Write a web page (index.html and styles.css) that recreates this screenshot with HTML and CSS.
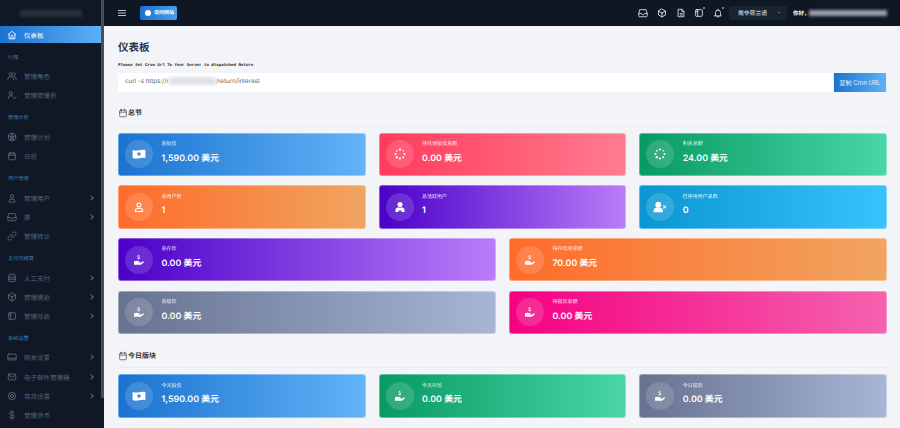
FILE: index.html
```html
<!DOCTYPE html>
<html lang="zh-CN">
<head>
    <meta charset="UTF-8">
    <title>仪表板</title>
    <link rel="stylesheet" href="styles.css">
</head>
<body>
    <svg class="sprite" width="0" height="0">
        <symbol id="i-home" viewBox="0 0 24 24"><path d="M3 11l9-8 9 8M5 9.500V21h14V9.500M9.500 21v-6a2.500 2.500 0 0 1 5 0v6"/></symbol>
        <symbol id="i-users" viewBox="0 0 24 24"><circle cx="9" cy="8" r="4"/><path d="M2 21v-2a5 5 0 0 1 5-5h4a5 5 0 0 1 5 5v2M16 4a4 4 0 0 1 0 8M18 14a5 5 0 0 1 4 5v2"/></symbol>
        <symbol id="i-user-check" viewBox="0 0 24 24"><circle cx="9" cy="8" r="4"/><path d="M3 21v-2a5 5 0 0 1 5-5h3a5 5 0 0 1 4 2M15 19l2.500 2.500L22 16"/></symbol>
        <symbol id="i-globe" viewBox="0 0 24 24"><circle cx="12" cy="12" r="9"/><circle cx="12" cy="12" r="3"/><path d="M12 3v6M12 15v6M3.500 9l6 2M14.500 11l6-2M7 19.500l3-5.500M17 19.500L14 14"/></symbol>
        <symbol id="i-calendar" viewBox="0 0 24 24"><rect x="4" y="5" width="16" height="16" rx="2"/><path d="M4 10h16M8 3v4M16 3v4"/></symbol>
        <symbol id="i-user" viewBox="0 0 24 24"><circle cx="12" cy="8" r="4"/><path d="M5 21v-2a4 4 0 0 1 4-4h6a4 4 0 0 1 4 4v2z"/></symbol>
        <symbol id="i-inbox" viewBox="0 0 24 24"><path d="M5 4h14l3 9v6a2 2 0 0 1-2 2H4a2 2 0 0 1-2-2v-6zM2 13h6l2 3h4l2-3h6"/></symbol>
        <symbol id="i-link" viewBox="0 0 24 24"><path d="M10 14a4.500 4.500 0 0 0 6.500 0l4-4a4.500 4.500 0 0 0-6.500-6.500l-1 1M14 10a4.500 4.500 0 0 0-6.500 0l-4 4a4.500 4.500 0 0 0 6.500 6.500l1-1"/></symbol>
        <symbol id="i-database" viewBox="0 0 24 24"><rect x="4" y="3" width="16" height="18" rx="4"/><path d="M4 10h16M4 15h16"/></symbol>
        <symbol id="i-box" viewBox="0 0 24 24"><path d="M12 2.500l8.500 5v9l-8.500 5-8.500-5v-9zM12 12l8.500-4.500M12 12L3.500 7.500M12 12v9.500"/></symbol>
        <symbol id="i-layout" viewBox="0 0 24 24"><rect x="4" y="4" width="16" height="16" rx="1.500"/><path d="M9 4v16M4 9h5"/></symbol>
        <symbol id="i-card" viewBox="0 0 24 24"><rect x="2" y="5" width="20" height="14" rx="2"/><path d="M2 15h20"/></symbol>
        <symbol id="i-mail" viewBox="0 0 24 24"><rect x="3" y="5" width="18" height="14" rx="2"/><path d="M3 7l9 6 9-6"/></symbol>
        <symbol id="i-gear" viewBox="0 0 24 24"><circle cx="12" cy="12" r="3.500"/><path d="M12 2.500l2.500 2.500h4.500v4.500l2.500 2.500-2.500 2.500v4.500h-4.500L12 21.500 9.500 19H5v-4.500L2.500 12 5 9.500V5h4.500z"/></symbol>
        <symbol id="i-dollar" viewBox="0 0 24 24"><path d="M17 7a4 4 0 0 0-4-2.500h-2.500a3.500 3.500 0 0 0 0 7.500h3a3.500 3.500 0 0 1 0 7.500H10a4 4 0 0 1-4-2.500M12 2v20"/></symbol>
        <symbol id="i-file" viewBox="0 0 24 24"><path d="M6 3h8l5 5v13H6zM14 3v5h5M10 13h5M10 17h5"/></symbol>
        <symbol id="i-bell" viewBox="0 0 24 24"><path d="M6 17V11a6 6 0 0 1 12 0v6l2 2H4zM10 21h4M12 3v2"/></symbol>
        <symbol id="i-cash" viewBox="0 0 24 24"><path class="solid" fill-rule="evenodd" d="M1 5c7 3 15-2 22 0v14c-7-2-15 3-22 0zM12 9a3 3 0 1 0 0 6 3 3 0 0 0 0-6z"/></symbol>
        <symbol id="i-spin" viewBox="0 0 24 24"><g class="solid"><circle cx="12" cy="3" r="2.200"/><circle cx="18.400" cy="5.600" r="1.500"/><circle cx="21" cy="12" r="1.800"/><circle cx="18.400" cy="18.400" r="2"/><circle cx="12" cy="21" r="2.200"/><circle cx="5.600" cy="18.400" r="2.400"/><circle cx="3" cy="12" r="2"/><circle cx="5.600" cy="5.600" r="1.800"/></g></symbol>
        <symbol id="i-user-solid" viewBox="0 0 24 24"><g class="solid"><circle cx="12" cy="7" r="5"/><path d="M3 22v-4a5 5 0 0 1 5-5h8a5 5 0 0 1 5 5v4h-6v-3h-6v3z"/></g></symbol>
        <symbol id="i-user-x" viewBox="0 0 24 24"><g class="solid"><circle cx="9" cy="8" r="5"/><path d="M1 21v-2a6 6 0 0 1 6-6h4a6 6 0 0 1 6 6v2z"/><path d="M17 10l1.200-1.200 1.800 1.800 1.800-1.800L23 10l-1.800 1.800 1.800 1.800-1.200 1.200-1.800-1.800-1.800 1.800-1.200-1.200 1.800-1.800z"/></g></symbol>
        <symbol id="i-hand" viewBox="0 0 24 24"><g class="solid"><path d="M2 15c3-2 5-2 7-1l4 1c2 .5 1.500 2.500 0 2.500H9.500v.5H14l6-3c1.500-.6 2.500 1 1.500 2l-6 4.500H2z"/><path d="M12 2v1.200c1.200.2 2 1 2 2h-1.500c0-.5-.5-.8-1.200-.8-.7 0-1.200.3-1.200.8 0 1.500 4 .6 4 3.100 0 1-.8 1.700-2.100 1.900V11.500h-1.200v-1.300c-1.300-.2-2.100-1-2.200-2.100h1.500c0 .6.600 1 1.400 1s1.300-.3 1.300-.8c0-1.500-4-.6-4-3.100 0-1 .8-1.800 2-2V2z"/></g></symbol>
    </svg>

    <aside class="sidebar">
        <div class="brand"><span class="smudge brand-smudge"></span></div>
        <nav class="menu">
            <a class="item active"><svg class="ico"><use href="#i-home"/></svg>仪表板</a>
            <div class="group">行政</div>
            <a class="item"><svg class="ico"><use href="#i-users"/></svg>管理角色</a>
            <a class="item"><svg class="ico"><use href="#i-user-check"/></svg>管理管理员</a>
            <div class="group">管理计划</div>
            <a class="item"><svg class="ico"><use href="#i-globe"/></svg>管理计划</a>
            <a class="item"><svg class="ico"><use href="#i-calendar"/></svg>日程</a>
            <div class="group">用户管理</div>
            <a class="item more"><svg class="ico"><use href="#i-user"/></svg>管理用户</a>
            <a class="item more"><svg class="ico"><use href="#i-inbox"/></svg>票</a>
            <a class="item"><svg class="ico"><use href="#i-link"/></svg>管理转诊</a>
            <div class="group">支付与结算</div>
            <a class="item more"><svg class="ico"><use href="#i-database"/></svg>人工支付</a>
            <a class="item more"><svg class="ico"><use href="#i-box"/></svg>管理提款</a>
            <a class="item more"><svg class="ico"><use href="#i-layout"/></svg>管理存款</a>
            <div class="group">系统设置</div>
            <a class="item more"><svg class="ico"><use href="#i-card"/></svg>网关设置</a>
            <a class="item more"><svg class="ico"><use href="#i-mail"/></svg>电子邮件管理器</a>
            <a class="item more"><svg class="ico"><use href="#i-gear"/></svg>常规设置</a>
            <a class="item"><svg class="ico"><use href="#i-dollar"/></svg>管理货币</a>
        </nav>
        <div class="scrollbar"></div>
    </aside>

    <div class="page">
        <header class="topbar">
            <svg class="burger" viewBox="0 0 8 6"><path d="M0 .5h8M0 3h8M0 5.500h8"/></svg>
            <a class="visit"><span class="visit-dot"></span>访问网站</a>
            <div class="top-right">
                <span class="top-icon"><svg><use href="#i-inbox"/></svg></span>
                <span class="top-icon"><svg><use href="#i-box"/></svg></span>
                <span class="top-icon"><svg><use href="#i-file"/></svg></span>
                <span class="top-icon dot"><svg><use href="#i-layout"/></svg></span>
                <span class="top-icon dot"><svg><use href="#i-bell"/></svg></span>
                <div class="lang">南非荷兰语<span class="caret"></span></div>
                <div class="hello">你好，<span class="smudge hello-smudge"></span></div>
            </div>
        </header>

        <main class="content">
            <h1>仪表板</h1>
            <p class="cron-note">Please Set Cron Url To Your Server to dispatched Return</p>
            <div class="cron-row">
                <div class="cron-input">curl -s https://r<span class="smudge url-smudge"></span>/return/interest</div>
                <button class="cron-btn">复制 Cron URL</button>
            </div>

            <h2 class="section-title"><svg><use href="#i-calendar"/></svg>总节</h2>
            <div class="stats">
                <div class="card third blue"><span class="round"><svg class="wide"><use href="#i-cash"/></svg></span><div><p class="label">总投资</p><p class="value">1,590.00 美元</p></div></div>
                <div class="card third red"><span class="round"><svg><use href="#i-spin"/></svg></span><div><p class="label">待处理投资总额</p><p class="value">0.00 美元</p></div></div>
                <div class="card third green"><span class="round"><svg><use href="#i-spin"/></svg></span><div><p class="label">利息总额</p><p class="value">24.00 美元</p></div></div>
                <div class="card third orange"><span class="round"><svg class="thin"><use href="#i-user"/></svg></span><div><p class="label">总用户数</p><p class="value">1</p></div></div>
                <div class="card third purple"><span class="round"><svg><use href="#i-user-solid"/></svg></span><div><p class="label">总活跃用户</p><p class="value">1</p></div></div>
                <div class="card third cyan"><span class="round"><svg class="wide"><use href="#i-user-x"/></svg></span><div><p class="label">已停用用户总数</p><p class="value">0</p></div></div>
                <div class="card half purple"><span class="round"><svg><use href="#i-hand"/></svg></span><div><p class="label">总存款</p><p class="value">0.00 美元</p></div></div>
                <div class="card half orange"><span class="round"><svg><use href="#i-hand"/></svg></span><div><p class="label">待存款项总额</p><p class="value">70.00 美元</p></div></div>
                <div class="card half grey"><span class="round"><svg><use href="#i-hand"/></svg></span><div><p class="label">总提款</p><p class="value">0.00 美元</p></div></div>
                <div class="card half pink"><span class="round"><svg><use href="#i-hand"/></svg></span><div><p class="label">待提款总额</p><p class="value">0.00 美元</p></div></div>
            </div>

            <h2 class="section-title today"><svg><use href="#i-calendar"/></svg>今日版块</h2>
            <div class="stats">
                <div class="card third blue"><span class="round"><svg class="wide"><use href="#i-cash"/></svg></span><div><p class="label">今天投资</p><p class="value">1,590.00 美元</p></div></div>
                <div class="card third green"><span class="round"><svg><use href="#i-hand"/></svg></span><div><p class="label">今天存款</p><p class="value">0.00 美元</p></div></div>
                <div class="card third grey"><span class="round"><svg><use href="#i-hand"/></svg></span><div><p class="label">今日提款</p><p class="value">0.00 美元</p></div></div>
            </div>
        </main>
    </div>
</body>
</html>
```

FILE: styles.css
```css
/* Base */
html, body {
    height: 100%;
}
body {
    margin: 0;
    display: flex;
    overflow: hidden;
    background-color: #f3f4f7;
    color: #2a3350;
    font-family: 'Inter', 'Noto Sans CJK SC', sans-serif;
    text-rendering: geometricPrecision;
}
p, h1, h2 {
    margin: 0;
}
.sprite {
    display: none;
}
svg {
    fill: none;
    stroke: currentColor;
    stroke-width: 2;
    stroke-linecap: round;
    stroke-linejoin: round;
}
.solid {
    fill: #fff;
    stroke: none;
}
.smudge {
    display: inline-block;
    filter: blur(1.5px);
}

/* Sidebar */
.sidebar {
    position: relative;
    flex: 0 0 104px;
    height: 428px;
    overflow: hidden;
    background-color: #0f1824;
}
.brand {
    display: flex;
    align-items: center;
    height: 26px;
    padding-left: 20px;
}
.brand-smudge {
    width: 62px;
    height: 7px;
    background-color: #2a303b;
}
.item {
    display: flex;
    align-items: center;
    height: 19.100px;
    padding-right: 6px;
    box-sizing: border-box;
    color: #53647e;
    font-size: 6.500px;
}
.item .ico {
    flex: 0 0 10px;
    width: 10px;
    height: 10px;
    margin: 0 7px;
    color: #5d6d87;
}
.item.active {
    height: 17px;
    margin-bottom: 1px;
    background: linear-gradient(to right, #1a73d0, #5fb2f7);
    color: #fff;
}
.item.active .ico {
    color: #fff;
}
.item.more::after {
    content: "";
    width: 3px;
    height: 3px;
    margin: 0 5px 0 auto;
    border-top: 1px solid #53647e;
    border-right: 1px solid #53647e;
    transform: rotate(45deg);
}
.group {
    height: 9px;
    padding: 9.600px 0 4px 8px;
    color: #3d78bd;
    font-size: 5.200px;
    line-height: 9px;
}
.scrollbar {
    position: absolute;
    top: 0;
    right: 0;
    width: 3px;
    height: 398px;
    background-color: #4a4f57;
}

/* Top bar */
.page {
    flex: 1;
    min-width: 0;
}
.topbar {
    display: flex;
    align-items: center;
    height: 25.500px;
    padding: 0 12px 0 14px;
    box-sizing: border-box;
    background-color: #0f1724;
    color: #e8ebf0;
}
.burger {
    width: 8px;
    height: 6px;
    stroke-width: .8;
}
.visit {
    display: flex;
    align-items: center;
    gap: 3.500px;
    height: 14px;
    margin-left: 14px;
    padding: 0 3px 0 4.500px;
    border-radius: 2px;
    background: linear-gradient(to right, #1a73d0, #4a9fe8);
    color: #fff;
    font-size: 5px;
    font-weight: 700;
}
.visit-dot {
    width: 6px;
    height: 6px;
    border-radius: 50%;
    background-color: #fff;
}
.top-right {
    display: flex;
    align-items: center;
    margin-left: auto;
}
.top-icon {
    position: relative;
    display: flex;
    justify-content: center;
    width: 18.600px;
}
.top-icon svg {
    width: 10px;
    height: 10px;
}
.top-icon.dot::after {
    content: "";
    position: absolute;
    top: -1px;
    right: 3px;
    width: 2px;
    height: 2px;
    border-radius: 50%;
    background-color: #e8913a;
}
.lang {
    display: flex;
    align-items: center;
    justify-content: space-between;
    width: 58px;
    height: 14px;
    margin-left: 2px;
    padding: 0 7px 0 9px;
    box-sizing: border-box;
    border-radius: 2px;
    background-color: #1a2431;
    font-size: 5.800px;
}
.caret {
    border: 1.500px solid transparent;
    border-top-color: #c5cad3;
    border-bottom: 0;
}
.hello {
    display: flex;
    align-items: center;
    width: 95px;
    margin-left: 6px;
    color: #fff;
    font-size: 5.500px;
    font-weight: 700;
}
.hello-smudge {
    width: 78px;
    height: 6px;
    margin-left: -1px;
    background-color: #9a9ea6;
}

/* Content */
.content {
    padding: 14px 13px 0 14px;
}
h1 {
    font-size: 10.500px;
    font-weight: 700;
    line-height: 15px;
}
.cron-note {
    margin-top: 8px;
    color: #222;
    font-family: 'Liberation Mono', monospace;
    font-size: 4.100px;
    font-weight: 700;
    line-height: 6px;
}
.cron-row {
    display: flex;
    height: 18.500px;
    margin-top: 4.500px;
}
.cron-input {
    flex: 1;
    padding-left: 7px;
    background-color: #fff;
    color: #666;
    font-size: 6.200px;
    line-height: 18.500px;
}
.url-smudge {
    width: 47px;
    height: 8px;
    background-color: #e0e2e6;
    vertical-align: -2px;
}
.cron-btn {
    width: 54px;
    padding: 0;
    border: 1px solid #e6f0fb;
    border-width: 0 1px 0 1px;
    background: linear-gradient(to right, #1a73d0, #5fb2f7);
    color: #e6f0fb;
    font-family: inherit;
    font-size: 6px;
}
.section-title {
    display: flex;
    align-items: center;
    height: 18px;
    margin-top: 12px;
    padding-bottom: 4px;
    border-bottom: 1px solid #ebecf0;
    color: #333;
    font-size: 7px;
    font-weight: 700;
}
.section-title svg {
    width: 10px;
    height: 10px;
    stroke-width: 1.500;
}
.section-title.today {
    height: 15px;
    margin-top: 14.500px;
    padding-bottom: 3.500px;
}

/* Stat cards */
.stats {
    display: grid;
    grid-template-columns: repeat(6, 1fr);
    gap: 9.400px 13px;
    margin-top: 6.200px;
}
.card {
    display: flex;
    align-items: center;
    gap: 8.400px;
    height: 43.300px;
    padding-left: 6px;
    box-sizing: border-box;
    border: 1px solid rgba(255, 255, 255, .35);
    border-radius: 3px;
    background-origin: border-box;
    color: #fff;
}
.card > div {
    margin-bottom: 4px;
}
.third {
    grid-column: span 2;
}
.half {
    grid-column: span 3;
}
.round {
    display: flex;
    flex: 0 0 28px;
    align-items: center;
    justify-content: center;
    height: 28px;
    border-radius: 50%;
    background-color: rgba(255, 255, 255, .15);
}
.round svg {
    width: 12px;
    height: 12px;
}
.round svg.wide {
    width: 14px;
    height: 14px;
}
.round svg.thin {
    stroke-width: 2.200;
}
.label {
    font-size: 5px;
    line-height: 7px;
    opacity: .85;
}
.value {
    margin-top: 4.500px;
    font-size: 8.900px;
    font-weight: 600;
    line-height: 11px;
}
.blue { background-image: linear-gradient(to right, #1a73d0, #62b3f7); }
.red { background-image: linear-gradient(to right, #ff3b5c, #ff7c8f); }
.green { background-image: linear-gradient(to right, #089a63, #4ad6a7); }
.orange { background-image: linear-gradient(to right, #ff6b2a, #f0a560); }
.purple { background-image: linear-gradient(to right, #4a00c8, #ba7cf9); }
.cyan { background-image: linear-gradient(to right, #0a96d2, #38c3fc); }
.grey { background-image: linear-gradient(to right, #667290, #a9b5d5); }
.pink { background-image: linear-gradient(to right, #f50082, #f562ae); }
```
